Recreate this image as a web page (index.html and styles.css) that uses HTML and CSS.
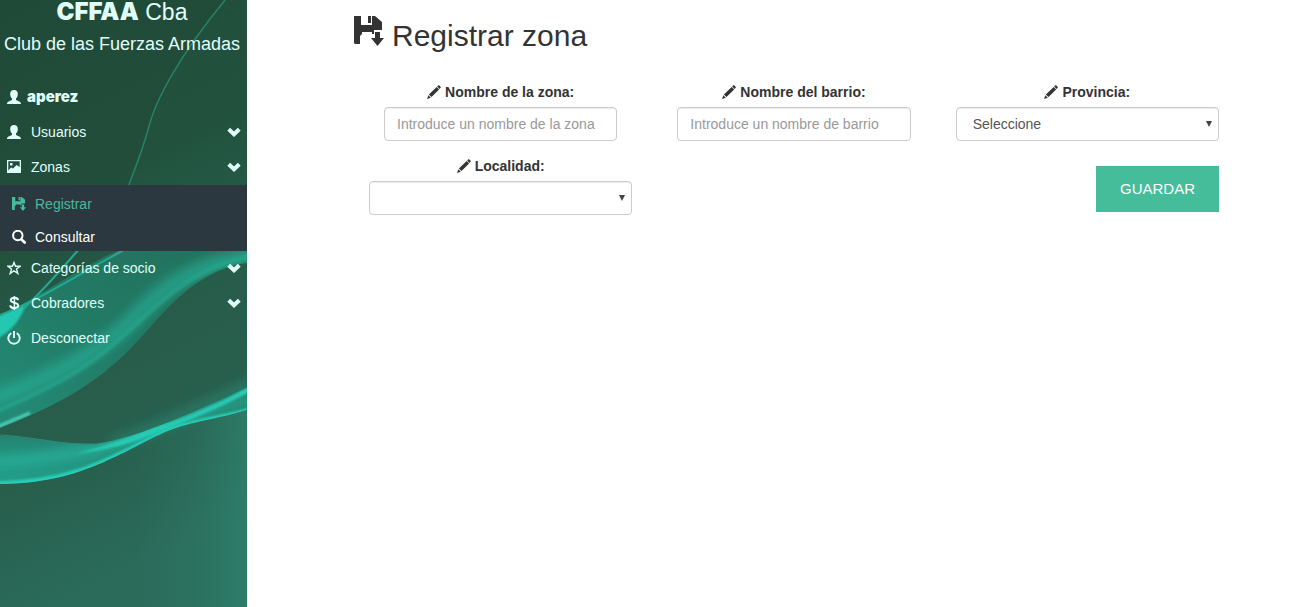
FILE: index.html
```html
<!DOCTYPE html>
<html lang="es">
<head>
<meta charset="utf-8">
<meta name="viewport" content="width=device-width, initial-scale=1">
<title>Registrar zona</title>
<link rel="stylesheet" href="styles.css">
</head>
<body>
<svg class="defs" aria-hidden="true">
  <symbol id="user" viewBox="0 0 14 14"><path d="M7 0C4.500 0 3.200 1.600 3.200 3.900C3.200 5.900 4 7.400 5 8.400V10C3.800 10.800 0 11.200 0 14H14C14 11.200 10.200 10.800 9 10V8.400C10 7.400 10.800 5.900 10.800 3.900C10.800 1.600 9.500 0 7 0Z"/></symbol>
  <symbol id="picture" viewBox="0 0 14 14"><path fill-rule="evenodd" d="M0 0H14V13H0ZM1.300 1.300V10.500L4 7.500L6 8.500L9.500 5L12.700 7V1.300ZM3 3H5.500V5.500H3Z"/></symbol>
  <symbol id="save" viewBox="0 0 30 30"><path d="M0 0H7V9H18V0H21L28 6V14H20V18H18V16H8V18L6 20V28H1L0 27ZM14 0H17V7H14ZM21 16H26V22H30L23.500 30L17 22H21Z"/></symbol>
  <symbol id="search" viewBox="0 0 14 14"><path fill="none" stroke="currentColor" stroke-width="2" d="M10.500 5.500A4.700 4.700 0 1 1 1.100 5.500A4.700 4.700 0 0 1 10.500 5.500Z"/><path fill="none" stroke="currentColor" stroke-width="2.600" stroke-linecap="round" d="M9.500 9.500L12.700 12.500"/></symbol>
  <symbol id="star" viewBox="0 0 14 14"><path fill="none" stroke="currentColor" stroke-width="1.400" d="M7 1.500L8.500 5.300H13L9.500 8L10.800 12.500L7 9.800L3.200 12.500L4.500 8L1 5.300H5.500Z"/></symbol>
  <symbol id="dollar" viewBox="0 0 14 14"><path fill="none" stroke="currentColor" stroke-width="2.100" d="M11 4.200C10.500 1 3.800 1.200 3.800 4.300C3.800 7.300 11.200 6 11.200 9.500C11.200 13 3.500 13 3.200 9.300"/><path fill="none" stroke="currentColor" stroke-width="1.500" d="M7.400 0V14"/></symbol>
  <symbol id="off" viewBox="0 0 14 14"><path fill="none" stroke="currentColor" stroke-width="1.900" d="M4.300 2.100A5.700 5.700 0 1 0 9.700 2.100M7 0V7"/></symbol>
  <symbol id="chevron" viewBox="0 0 14 14"><path fill="none" stroke="currentColor" stroke-width="4" d="M1.700 4.300L7 9.300L12.300 4.300"/></symbol>
  <symbol id="pencil" viewBox="0 0 14 14"><path d="M11.300 0.200Q11.900 0 12.400 0.500L13.600 1.700Q14.100 2.300 13.600 2.800L12.500 3.900L10.200 1.600ZM9.700 2L12.100 4.400L4.500 12.100L1.900 9.600ZM1.400 10.300L3.800 12.700L0 14Z"/></symbol>
</svg>
<div class="layout">
  <aside class="sidebar">
    <svg class="waves" viewBox="0 0 247 607" preserveAspectRatio="xMidYMin slice" aria-hidden="true">
      <defs>
        <linearGradient id="base" x1="0" y1="0" x2="0.200" y2="1"><stop offset="0" stop-color="#204a38"/><stop offset="0.350" stop-color="#214d3a"/><stop offset="0.550" stop-color="#265b48"/><stop offset="0.800" stop-color="#285f4d"/><stop offset="1" stop-color="#2b6b5a"/></linearGradient>
        <linearGradient id="edge" x1="0" y1="0" x2="1" y2="0"><stop offset="0.550" stop-color="#2e8470" stop-opacity="0"/><stop offset="0.800" stop-color="#2e8470" stop-opacity="0.250"/><stop offset="1" stop-color="#2e8470" stop-opacity="0.700"/></linearGradient>
        <linearGradient id="band" x1="0" y1="0.900" x2="1" y2="0"><stop offset="0" stop-color="#238a75"/><stop offset="0.450" stop-color="#227a65"/><stop offset="1" stop-color="#23705b"/></linearGradient>
        <linearGradient id="low" x1="0" y1="0" x2="0" y2="1"><stop offset="0" stop-color="#286653"/><stop offset="0.400" stop-color="#23806c"/><stop offset="1" stop-color="#249f8a"/></linearGradient>
        <filter id="soft" x="-20%" y="-50%" width="140%" height="200%"><feGaussianBlur stdDeviation="6"/></filter>
        <filter id="fine" x="-10%" y="-20%" width="120%" height="140%"><feGaussianBlur stdDeviation="1.200"/></filter>
        <clipPath id="upper"><path d="M0 316C50 291 90 260 126 248H247V263C190 270 155 325 132 347C95 385 58 405 0 428Z"/></clipPath>
        <clipPath id="lower"><path d="M0 436C35 437 60 445 95 444C140 438 205 407 247 387V410C215 420 195 420 165 432C115 455 80 483 0 484Z"/></clipPath>
      </defs>
      <path fill="url(#base)" d="M0 0H247V607H0Z"/>
      <path fill="#2b7059" fill-opacity="0.120" d="M225 0C175 60 150 115 128 186L247 250V0Z"/>
      <path fill="none" stroke="#29816a" stroke-width="1.500" d="M225 0C180 55 155 100 148 130C141 155 134 171 128 187"/>
      <path fill="none" stroke="#28907a" stroke-opacity="0.500" stroke-width="14" filter="url(#soft)" d="M255 384C215 402 185 418 110 446"/>
      <path fill="url(#band)" d="M0 316C50 291 90 260 126 248H247V263C190 270 155 325 132 347C95 385 58 405 0 428Z"/>
      <g clip-path="url(#upper)">
        <path fill="none" stroke="#25ad95" stroke-width="14" stroke-opacity="0.800" filter="url(#soft)" d="M260 255C185 262 150 300 130 322C100 350 60 375 -10 400"/>
        <path fill="none" stroke="#26a88f" stroke-width="5" stroke-opacity="0.600" filter="url(#fine)" d="M252 256C195 266 160 302 130 330C100 358 70 380 -5 412"/>
        <path fill="#20c9b0" filter="url(#fine)" d="M-5 317L26 304C20 322 10 332 -5 340Z"/>
        <path fill="none" stroke="#4ad0b8" stroke-width="3" filter="url(#fine)" d="M-3 427L30 413"/>
      </g>
      <path fill="none" stroke="#24a790" stroke-width="2" d="M0 315C40 300 80 273 126 249M23 309C42 292 59 272 80 248"/>
      <path fill="url(#low)" d="M0 436C35 437 60 445 95 444C140 438 205 407 247 387V410C215 420 195 420 165 432C115 455 80 483 0 484Z"/>
      <g clip-path="url(#lower)">
        <path fill="none" stroke="#26c3ac" stroke-width="8" stroke-opacity="0.800" filter="url(#soft)" d="M260 396C215 410 195 415 163 426S90 458 -15 462"/>
        <path fill="#28cbb4" filter="url(#fine)" d="M250 386C215 405 185 418 160 425C140 432 120 442 75 454C120 448 140 440 160 432C190 420 220 408 250 392Z"/>
        <path fill="none" stroke="#28d0b9" stroke-width="5" filter="url(#fine)" d="M250 410C215 420 195 420 165 432C115 455 80 483 -5 484"/>
      </g>
      <path fill="none" stroke="#318b77" stroke-width="1" d="M0 435C35 437 60 445 95 444"/>
      <path fill="url(#edge)" d="M0 484C80 483 115 455 165 432C195 420 215 420 247 410V607H0Z"/>
    </svg>
    <div class="brand">
      <h1 class="brand-name"><strong>CFFAA</strong> Cba</h1>
      <p class="brand-text">Club de las Fuerzas Armadas</p>
    </div>
    <nav class="menu">
      <a class="item profile" href="#"><svg class="icon"><use href="#user"/></svg><span>aperez</span></a>
      <a class="item" href="#"><svg class="icon"><use href="#user"/></svg><span>Usuarios</span><svg class="icon arrow"><use href="#chevron"/></svg></a>
      <a class="item" href="#"><svg class="icon"><use href="#picture"/></svg><span>Zonas</span><svg class="icon arrow"><use href="#chevron"/></svg></a>
      <div class="submenu">
        <a class="subitem active" href="#"><svg class="icon"><use href="#save"/></svg><span>Registrar</span></a>
        <a class="subitem" href="#"><svg class="icon"><use href="#search"/></svg><span>Consultar</span></a>
      </div>
      <a class="item" href="#"><svg class="icon"><use href="#star"/></svg><span>Categorías de socio</span><svg class="icon arrow"><use href="#chevron"/></svg></a>
      <a class="item" href="#"><svg class="icon"><use href="#dollar"/></svg><span>Cobradores</span><svg class="icon arrow"><use href="#chevron"/></svg></a>
      <a class="item" href="#"><svg class="icon"><use href="#off"/></svg><span>Desconectar</span></a>
    </nav>
  </aside>
  <main class="content">
    <h2 class="title"><svg class="title-icon" aria-hidden="true"><use href="#save"/></svg><span>Registrar zona</span></h2>
    <form class="form">
      <div class="field inset">
        <label for="zona"><svg class="icon"><use href="#pencil"/></svg>Nombre de la zona:</label>
        <input class="control" id="zona" type="text" placeholder="Introduce un nombre de la zona">
      </div>
      <div class="field inset">
        <label for="barrio"><svg class="icon"><use href="#pencil"/></svg>Nombre del barrio:</label>
        <input class="control" id="barrio" type="text" placeholder="Introduce un nombre de barrio">
      </div>
      <div class="field">
        <label for="provincia"><svg class="icon"><use href="#pencil"/></svg>Provincia:</label>
        <div class="select"><select class="control" id="provincia"><option>Seleccione</option></select></div>
      </div>
      <div class="field">
        <label for="localidad"><svg class="icon"><use href="#pencil"/></svg>Localidad:</label>
        <div class="select"><select class="control" id="localidad"><option></option></select></div>
      </div>
      <button class="save" type="submit">GUARDAR</button>
    </form>
  </main>
</div>
</body>
</html>
```
FILE: styles.css
```css
* { box-sizing: border-box; }
body {
  margin: 0;
  background: #fff;
  color: #333;
  font: 14px/20px "Liberation Sans", Arial, sans-serif;
}
.defs { position: absolute; width: 0; height: 0; }
.layout {
  display: grid;
  grid-template-columns: 247px 1fr;
  min-height: 100vh;
}
.sidebar {
  position: relative;
  overflow: hidden;
  background: #285d4b;
  color: #e0fffa;
}
.waves { position: absolute; top: 0; left: 0; width: 100%; height: 100%; }
.brand, .menu { position: relative; }
.brand { padding: 0 3px 24px 0; text-align: center; }
.brand-name { margin: 0; font-size: 23px; line-height: 24px; font-weight: 400; }
.brand-name strong { font-family: Inter, "Liberation Sans", sans-serif; font-size: 24px; font-weight: 900; }
.brand-text { margin: 8px 0 0; font-size: 18px; line-height: 24px; white-space: nowrap; }
.icon { width: 14px; height: 14px; flex: none; fill: currentColor; }
.item, .subitem { display: flex; align-items: center; color: inherit; text-decoration: none; }
.item { height: 35px; padding: 0 6px 2px 7px; gap: 10px; }
.profile { gap: 6px; font-family: Inter, "Liberation Sans", sans-serif; font-size: 15px; font-weight: 900; }
.arrow { margin-left: auto; }
.submenu { display: grid; gap: 5px; padding-top: 5px; background: #2c3840; }
.subitem { height: 28px; padding: 0 12px; gap: 9px; color: #fff; }
.subitem.active { color: #45bc9a; }
.content { padding: 16px 71px 24px 107px; }
.title { display: flex; align-items: flex-start; gap: 8px; margin: 0; font-size: 30px; line-height: 40px; font-weight: 400; }
.title-icon { width: 30px; height: 30px; fill: currentColor; }
.form { display: grid; grid-template-columns: repeat(3, 1fr); row-gap: 15px; margin-top: 26px; }
.field { padding: 0 15px; }
.inset { padding: 0 30px; }
label { display: flex; justify-content: center; align-items: center; gap: 4px; margin-bottom: 5px; font-weight: 700; }
.control {
  display: block;
  width: 100%;
  height: 34px;
  padding: 6px 12px;
  border: 1px solid #ccc;
  border-radius: 4px;
  background: #fff;
  color: #555;
  font: inherit;
  box-shadow: inset 0 1px 1px rgba(0, 0, 0, .075);
}
.control::placeholder { color: #999; }
select.control { appearance: none; padding-left: 16px; }
.select { position: relative; }
.select::after {
  content: "";
  position: absolute;
  top: 14px;
  right: 7px;
  border: solid transparent;
  border-width: 6px 3px 0;
  border-top-color: #444;
  pointer-events: none;
}
.save {
  grid-column: 3;
  justify-self: end;
  align-self: start;
  height: 46px;
  margin: 10px 15px 0;
  padding: 0 24px;
  border: 0;
  background: #45bc9a;
  color: #fff;
  font: 15px/24px "Liberation Sans", Arial, sans-serif;
}
```
